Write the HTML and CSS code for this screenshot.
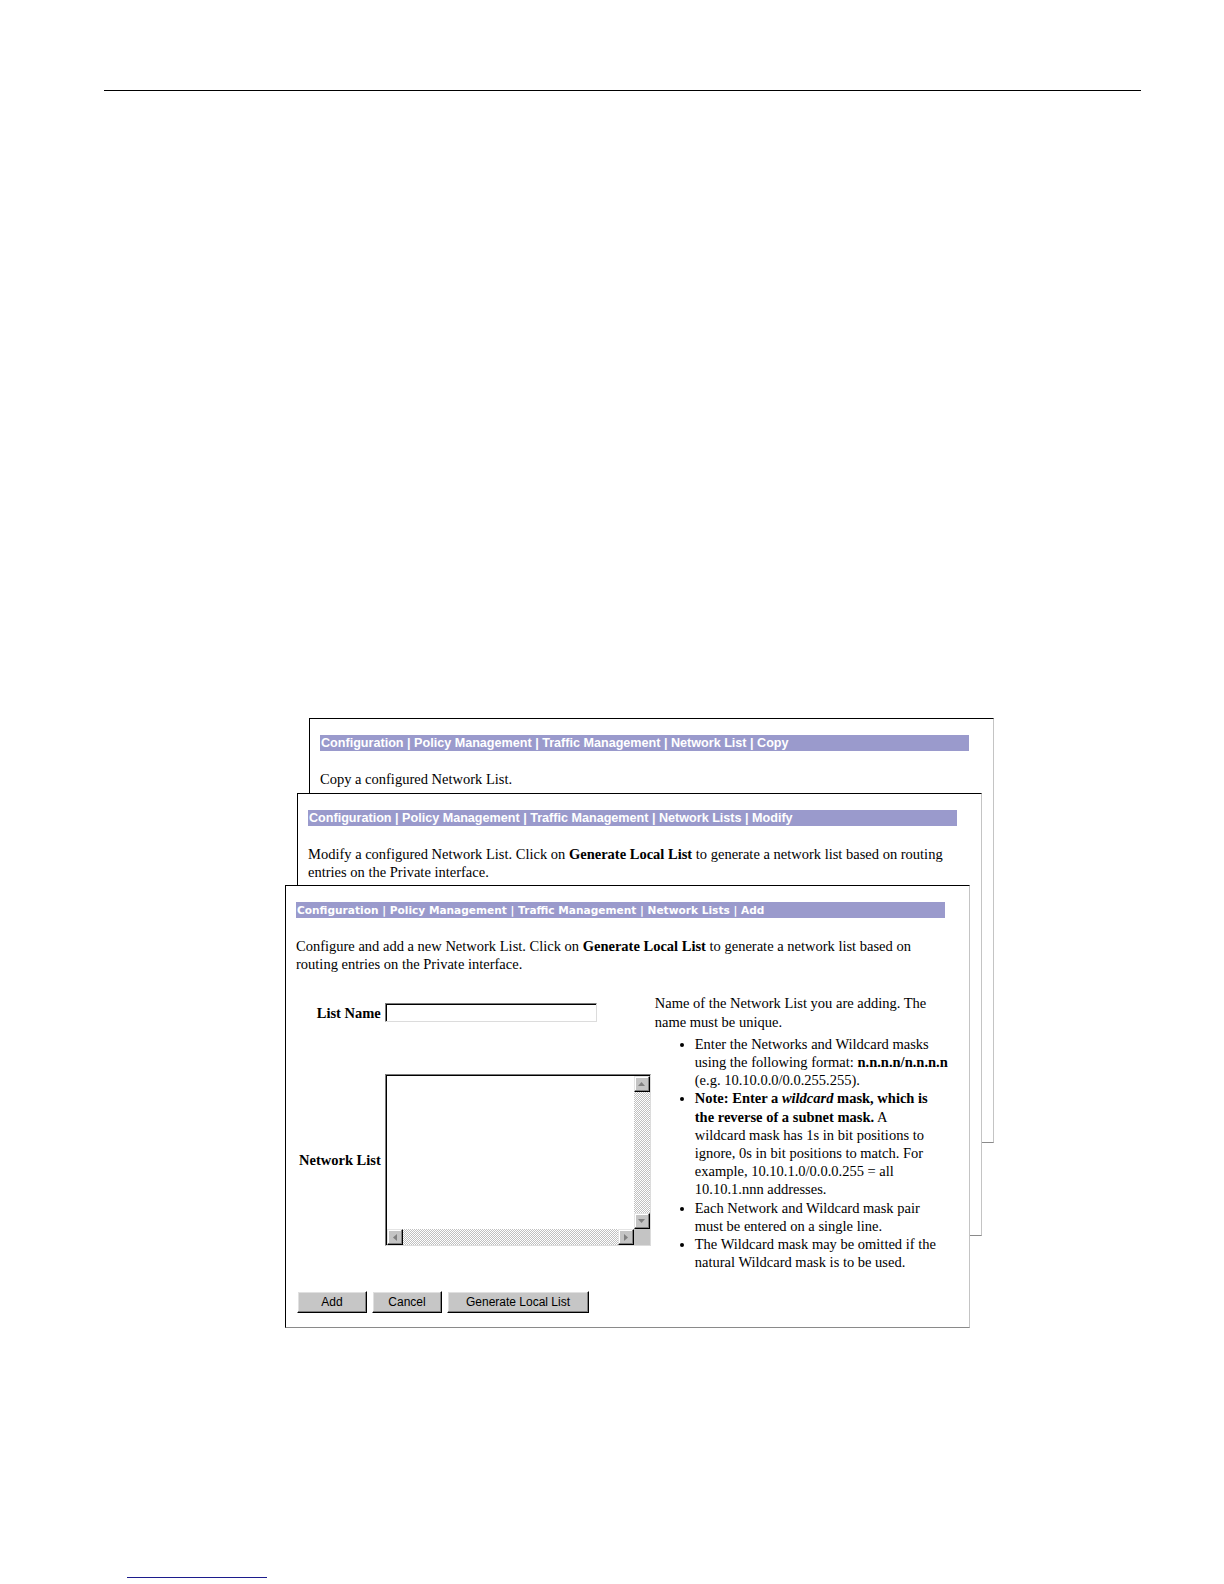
FILE: index.html
```html
<!DOCTYPE html>
<html lang="en">
<head>
<meta charset="utf-8">
<title>Network Lists | Add</title>
<link rel="stylesheet" href="styles.css">
</head>
<body>
<div class="page">
  <header class="page-header"></header>

  <div class="figure">
    <section class="window win-copy">
      <div class="titlebar narrow">Configuration | Policy Management | Traffic Management | Network List | Copy</div>
      <p class="intro">Copy a configured Network List.</p>
    </section>

    <section class="window win-modify">
      <div class="titlebar narrow">Configuration | Policy Management | Traffic Management | Network Lists | Modify</div>
      <p class="intro">Modify a configured Network List. Click on <b>Generate Local List</b> to generate a network list based on routing<br>entries on the Private interface.</p>
    </section>

    <section class="window win-add">
      <div class="titlebar wide">Configuration | Policy Management | Traffic Management | Network Lists | Add</div>
      <p class="intro">Configure and add a new Network List. Click on <b>Generate Local List</b> to generate a network list based on<br>routing entries on the Private interface.</p>

      <table class="form-table">
        <tr>
          <th class="label">List Name</th>
          <td class="field"><input type="text" class="text-input" aria-label="List Name"></td>
          <td class="help">Name of the Network List you are adding. The<br>name must be unique.</td>
        </tr>
        <tr>
          <th class="label">Network List</th>
          <td class="field">
            <div class="textarea">
              <div class="ta-text"></div>
              <div class="vscroll">
                <div class="sb-btn"><svg width="7" height="4" viewBox="0 0 7 4"><path d="M3.5 0 L7 4 L0 4 Z" fill="#808080"/></svg></div>
                <div class="sb-track"></div>
                <div class="sb-btn"><svg width="7" height="4" viewBox="0 0 7 4"><path d="M0 0 L7 0 L3.5 4 Z" fill="#808080"/></svg></div>
              </div>
              <div class="hscroll">
                <div class="sb-btn"><svg width="4" height="7" viewBox="0 0 4 7"><path d="M4 0 L4 7 L0 3.5 Z" fill="#808080"/></svg></div>
                <div class="sb-track"></div>
                <div class="sb-btn"><svg width="4" height="7" viewBox="0 0 4 7"><path d="M0 0 L4 3.5 L0 7 Z" fill="#808080"/></svg></div>
              </div>
              <div class="sb-corner"></div>
            </div>
          </td>
          <td class="help">
            <ul class="help-list">
              <li>Enter the Networks and Wildcard masks<br>using the following format: <b>n.n.n.n/n.n.n.n</b><br>(e.g. 10.10.0.0/0.0.255.255).</li>
              <li><b>Note: Enter a <i>wildcard</i> mask, which is<br>the reverse of a subnet mask.</b> A<br>wildcard mask has 1s in bit positions to<br>ignore, 0s in bit positions to match. For<br>example, 10.10.1.0/0.0.0.255 = all<br>10.10.1.nnn addresses.</li>
              <li>Each Network and Wildcard mask pair<br>must be entered on a single line.</li>
              <li>The Wildcard mask may be omitted if the<br>natural Wildcard mask is to be used.</li>
            </ul>
          </td>
        </tr>
      </table>

      <div class="buttons">
        <button type="button" class="btn btn-add">Add</button>
        <button type="button" class="btn btn-cancel">Cancel</button>
        <button type="button" class="btn btn-generate">Generate Local List</button>
      </div>
    </section>
  </div>

  <footer class="page-footer"></footer>
</div>
</body>
</html>
```

FILE: styles.css
```css
* {
  box-sizing: border-box;
}

html,
body {
  margin: 0;
  padding: 0;
  background: #fff;
}

body {
  font-family: "Liberation Serif", "Times New Roman", serif;
  color: #000;
}

.page {
  width: 1224px;
  height: 1584px;
  display: flex;
  flex-direction: column;
}

.page-header {
  flex: none;
  height: 91px;
  margin: 0 83px 0 104px;
  border-bottom: 1px solid #000;
}

/* stacked screenshot windows */
.figure {
  flex: none;
  position: relative;
  width: 710px;
  height: 610px;
  margin: 627px 0 0 285px;
}

.window {
  position: absolute;
  width: 685px;
  background: #fff;
  border: 1px solid;
  border-color: #000 #c4c4c4 #8a8a8a #000;
  padding: 16px 24px 0 10px;
}

.win-copy {
  left: 24px;
  top: 0;
  height: 425px;
}

.win-modify {
  left: 12px;
  top: 75px;
  height: 443px;
}

.win-add {
  left: 0;
  top: 167px;
  padding-bottom: 14px;
}

.titlebar {
  height: 16px;
  line-height: 16px;
  padding-left: 1px;
  background: #9a9acc;
  color: #fff;
  font-weight: bold;
  white-space: nowrap;
  overflow: hidden;
}

.titlebar.narrow {
  font-family: "Liberation Sans", Arial, sans-serif;
  font-size: 12.6px;
}

.titlebar.wide {
  font-family: "DejaVu Sans", Verdana, sans-serif;
  font-size: 10.6px;
}

.intro {
  margin: 19px 0 0;
  font-size: 14.5px;
  line-height: 18.2px;
}

/* form */
.form-table {
  margin-top: 18px;
  border-collapse: separate;
  border-spacing: 2px;
  font-size: 14.5px;
  line-height: 18.2px;
}

.form-table th,
.form-table td {
  padding: 1px;
  vertical-align: middle;
}

.label {
  text-align: right;
  font-weight: bold;
  white-space: nowrap;
}

.help {
  width: 292px;
  text-align: left;
  white-space: nowrap;
}

.help-list {
  margin: 0 0 14px;
  padding-left: 40px;
}

.text-input {
  display: block;
  width: 212px;
  height: 19px;
  margin: 0;
  padding: 0;
  border: 1px solid;
  border-color: #7a7a7a #dcdcdc #dcdcdc #7a7a7a;
  box-shadow: inset 1px 1px 0 #000;
  background: #fff;
}

.textarea {
  width: 266px;
  height: 172px;
  display: grid;
  grid-template-columns: 1fr 16px;
  grid-template-rows: 1fr 16px;
  border: 1px solid;
  border-color: #7a7a7a #dcdcdc #dcdcdc #7a7a7a;
  padding: 1px 0 0 1px;
  box-shadow: inset 1px 1px 0 #000;
  background: #fff;
}

.ta-text {
  background: #fff;
}

.vscroll {
  display: flex;
  flex-direction: column;
}

.hscroll {
  display: flex;
}

.sb-track {
  flex: 1;
  background: repeating-conic-gradient(#c0c0c0 0 25%, #fff 0 50%) 0 0 / 2px 2px;
}

.sb-btn {
  flex: none;
  width: 16px;
  height: 16px;
  display: flex;
  align-items: center;
  justify-content: center;
  background: #c4c4c4;
  border: 1px solid;
  border-color: #e4e4e4 #000 #000 #e4e4e4;
  box-shadow: inset -1px -1px 0 #808080, inset 1px 1px 0 #fff;
}

.sb-corner {
  background: #c4c4c4;
}

/* buttons */
.buttons {
  display: flex;
  gap: 5px;
  margin: 3px 0 0 1px;
}

.btn {
  height: 22px;
  padding: 0;
  font-family: "Liberation Sans", Arial, sans-serif;
  font-size: 12px;
  color: #000;
  background: #c6c6c6;
  border: 1px solid;
  border-color: #fff #000 #000 #fff;
  box-shadow: inset -1px -1px 0 #808080, inset 1px 1px 0 #e0e0e0;
}

.btn-add,
.btn-cancel {
  width: 70px;
}

.btn-generate {
  width: 142px;
}

.page-footer {
  flex: none;
  width: 140px;
  height: 7px;
  margin: auto 0 0 127px;
  border-top: 1px solid #1c1c8c;
}
```
